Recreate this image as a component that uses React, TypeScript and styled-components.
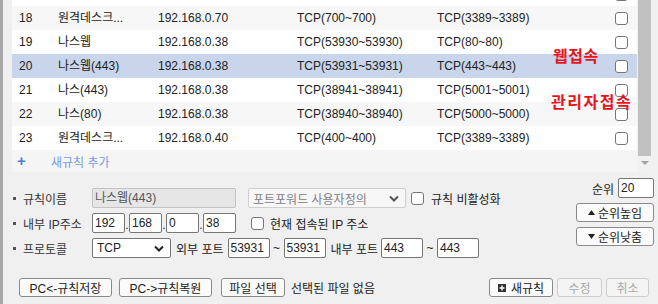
import React from "react";
import styled, { createGlobalStyle } from "styled-components";

const Global = createGlobalStyle`
  html, body { margin: 0; padding: 0; background: #ffffff; }
  * { box-sizing: border-box; }
`;

const Frame = styled.div`
  width: 658px;
  height: 304px;
  background: #f0f0f0;
  border-left: 3px solid #a8a8a8;
  display: flex;
  flex-direction: column;
  font-family: "Liberation Sans", "Noto Sans CJK KR", sans-serif;
  font-size: 12px;
  color: #222;
  position: relative;
  overflow: hidden;
`;

const ListArea = styled.div`
  display: flex;
  height: 172px;
  padding-left: 9px;
`;

const Table = styled.div`
  width: 625px;
  height: 172px;
  overflow: hidden;
  display: flex;
  flex-direction: column;
`;

const Rows = styled.div`
  margin-top: -18px;
`;

const Row = styled.div<{ $tone: "white" | "gray" | "sel" }>`
  display: grid;
  grid-template-columns: 39px 100px 139px 140px 1fr 22px;
  height: 24px;
  align-items: center;
  background: ${(p) => (p.$tone === "sel" ? "#c9d5ea" : p.$tone === "gray" ? "#f7f7f7" : "#ffffff")};
`;

const Cell = styled.div`
  padding-left: 7px;
  white-space: nowrap;
  overflow: hidden;
  line-height: 24px;
`;

const CheckCell = styled.div`
  display: flex;
  justify-content: flex-start;
  align-items: center;
`;

const Box = styled.span`
  display: inline-block;
  width: 13px;
  height: 13px;
  border: 1px solid #767676;
  border-radius: 3px;
  background: #fff;
  flex: none;
`;

const AddRow = styled.div`
  display: flex;
  align-items: center;
  height: 22px;
  background: #f5f5f5;
  color: #7b9be0;
`;

const Plus = styled.span`
  width: 39px;
  padding-left: 5px;
  color: #4f7bd3;
  font-size: 15px;
  font-weight: bold;
  line-height: 22px;
`;

const Scrollbar = styled.div`
  width: 15px;
  height: 172px;
  background: #f1f1f1;
  display: flex;
  flex-direction: column;
  align-items: center;
`;

const Thumb = styled.div`
  width: 13px;
  height: 156px;
  background: #c1c1c1;
`;

const ArrowDown = styled.div`
  margin-top: 5px;
  width: 0;
  height: 0;
  border-left: 4px solid transparent;
  border-right: 4px solid transparent;
  border-top: 4px solid #a3a3a3;
`;

const Note = styled.div<{ $top: number; $left: number; $ls: number }>`
  position: absolute;
  top: ${(p) => p.$top}px;
  left: ${(p) => p.$left}px;
  color: #e8141c;
  font-family: "Noto Sans CJK KR", sans-serif;
  font-weight: bold;
  font-size: 16px;
  line-height: 18px;
  letter-spacing: ${(p) => p.$ls}px;
`;

const FormArea = styled.div`
  display: flex;
  flex-direction: column;
  padding-left: 9px;
`;

const TopSection = styled.div`
  display: flex;
`;

const LeftForm = styled.div`
  display: flex;
  flex-direction: column;
  gap: 5px;
  padding-top: 16px;
  width: 560px;
`;

const FormRow = styled.div`
  display: flex;
  align-items: center;
  height: 20px;
`;

const Label = styled.div`
  width: 80px;
  display: flex;
  align-items: center;
  color: #333;
  font-size: 12px;
  white-space: nowrap;
`;

const Bullet = styled.span`
  width: 3px;
  height: 3px;
  background: #555;
  margin: 0 7px 0 1px;
`;

const Input = styled.div<{ $w: number; $disabled?: boolean }>`
  width: ${(p) => p.$w}px;
  height: 20px;
  border: 1px solid ${(p) => (p.$disabled ? "#c3c3c3" : "#767676")};
  border-radius: 2px;
  background: ${(p) => (p.$disabled ? "#e6e6e6" : "#ffffff")};
  color: ${(p) => (p.$disabled ? "#555" : "#222")};
  padding-left: 2px;
  line-height: 18px;
  font-size: 12px;
  white-space: nowrap;
  overflow: hidden;
  flex: none;
`;

const Dot = styled.span`
  width: 4px;
  text-align: center;
  align-self: flex-end;
  line-height: 16px;
  color: #333;
`;

const Select = styled.div<{ $w: number; $disabled?: boolean }>`
  width: ${(p) => p.$w}px;
  height: 20px;
  border: 1px solid ${(p) => (p.$disabled ? "#cfcfcf" : "#767676")};
  border-radius: 2px;
  background: ${(p) => (p.$disabled ? "#f7f7f7" : "#ffffff")};
  color: ${(p) => (p.$disabled ? "#808080" : "#222")};
  display: flex;
  align-items: center;
  justify-content: space-between;
  padding: 0 6px 0 4px;
  flex: none;
  white-space: nowrap;
`;

const Gap = styled.span<{ $w: number }>`
  width: ${(p) => p.$w}px;
  flex: none;
`;

const Text = styled.span`
  white-space: nowrap;
  color: #222;
`;

const Tilde = styled.span`
  width: 14px;
  text-align: center;
  flex: none;
`;

const RightCol = styled.div`
  display: flex;
  flex-direction: column;
  align-items: flex-end;
  gap: 5px;
  padding-top: 6px;
  width: 82px;
`;

const Rank = styled.div`
  display: flex;
  align-items: center;
  gap: 4px;
`;

const Button = styled.div<{ $w: number; $disabled?: boolean; $h?: number }>`
  width: ${(p) => p.$w}px;
  height: ${(p) => p.$h ?? 19}px;
  border: 1px solid ${(p) => (p.$disabled ? "#cccccc" : "#8a8a8a")};
  border-radius: 3px;
  background: ${(p) => (p.$disabled ? "#f4f4f4" : "#fbfbfb")};
  color: ${(p) => (p.$disabled ? "#aaaaaa" : "#222")};
  display: flex;
  align-items: center;
  justify-content: center;
  gap: 2px;
  white-space: nowrap;
  flex: none;
  font-size: 12px;
`;

const BottomBar = styled.div`
  display: flex;
  align-items: center;
  margin-top: 20px;
  padding-left: 7px;
  width: 637px;
`;

const Spacer = styled.div`
  flex: 1;
`;

const Tri = styled.svg`
  width: 7px;
  height: 5px;
  margin-right: 1px;
`;

const NewIcon = styled.svg`
  width: 8px;
  height: 8px;
  margin-right: 3px;
`;

type R = { n: string; name: string; ip: string; ext: string; int: string };
const rows: R[] = [
  { n: "", name: "", ip: "", ext: "", int: "" },
  { n: "18", name: "원격데스크...", ip: "192.168.0.70", ext: "TCP(700~700)", int: "TCP(3389~3389)" },
  { n: "19", name: "나스웹", ip: "192.168.0.38", ext: "TCP(53930~53930)", int: "TCP(80~80)" },
  { n: "20", name: "나스웹(443)", ip: "192.168.0.38", ext: "TCP(53931~53931)", int: "TCP(443~443)" },
  { n: "21", name: "나스(443)", ip: "192.168.0.38", ext: "TCP(38941~38941)", int: "TCP(5001~5001)" },
  { n: "22", name: "나스(80)", ip: "192.168.0.38", ext: "TCP(38940~38940)", int: "TCP(5000~5000)" },
  { n: "23", name: "원격데스크...", ip: "192.168.0.40", ext: "TCP(400~400)", int: "TCP(3389~3389)" },
];

const Chevron = ({ color }: { color: string }) => (
  <svg width="10" height="7" viewBox="0 0 10 7">
    <path d="M1 1.5 L5 5.5 L9 1.5" fill="none" stroke={color} strokeWidth="2" />
  </svg>
);

export default function App() {
  return (
    <Frame>
      <Global />
      <ListArea>
        <Table>
          <Rows>
            {rows.map((r, i) => (
              <Row key={i} $tone={r.n === "20" ? "sel" : i % 2 === 1 ? "gray" : "white"}>
                <Cell>{r.n}</Cell>
                <Cell>{r.name}</Cell>
                <Cell>{r.ip}</Cell>
                <Cell>{r.ext}</Cell>
                <Cell>{r.int}</Cell>
                <CheckCell>
                  <Box />
                </CheckCell>
              </Row>
            ))}
          </Rows>
          <AddRow>
            <Plus>+</Plus>
            <span>새규칙 추가</span>
          </AddRow>
        </Table>
        <Scrollbar>
          <Thumb />
          <ArrowDown />
        </Scrollbar>
      </ListArea>

      <Note $top={46} $left={550} $ls={0.5}>웹접속</Note>
      <Note $top={92} $left={548} $ls={1.5}>관리자접속</Note>

      <FormArea>
        <TopSection>
          <LeftForm>
            <FormRow>
              <Label>
                <Bullet />
                규칙이름
              </Label>
              <Input $w={144} $disabled>
                나스웹(443)
              </Input>
              <Gap $w={12} />
              <Select $w={158} $disabled>
                <span>포트포워드 사용자정의</span>
                <Chevron color="#555" />
              </Select>
              <Gap $w={5} />
              <Box />
              <Gap $w={7} />
              <Text>규칙 비활성화</Text>
            </FormRow>
            <FormRow>
              <Label>
                <Bullet />
                내부 IP주소
              </Label>
              <Input $w={33}>192</Input>
              <Dot>.</Dot>
              <Input $w={33}>168</Input>
              <Dot>.</Dot>
              <Input $w={33}>0</Input>
              <Dot>.</Dot>
              <Input $w={33}>38</Input>
              <Gap $w={15} />
              <Box />
              <Gap $w={6} />
              <Text>현재 접속된 IP 주소</Text>
            </FormRow>
            <FormRow>
              <Label>
                <Bullet />
                프로토콜
              </Label>
              <Select $w={79}>
                <span>TCP</span>
                <Chevron color="#222" />
              </Select>
              <Gap $w={5} />
              <Text>외부 포트</Text>
              <Gap $w={4} />
              <Input $w={42}>53931</Input>
              <Tilde>~</Tilde>
              <Input $w={42}>53931</Input>
              <Gap $w={5} />
              <Text>내부 포트</Text>
              <Gap $w={3} />
              <Input $w={42}>443</Input>
              <Tilde>~</Tilde>
              <Input $w={42}>443</Input>
            </FormRow>
          </LeftForm>
          <RightCol>
            <Rank>
              <Text>순위</Text>
              <Input $w={36}>20</Input>
            </Rank>
            <Button $w={78}>
              <Tri viewBox="0 0 7 5">
                <path d="M3.5 0 L7 5 L0 5 Z" fill="#222" />
              </Tri>
              순위높임
            </Button>
            <Button $w={78}>
              <Tri viewBox="0 0 7 5">
                <path d="M0 0 L7 0 L3.5 5 Z" fill="#222" />
              </Tri>
              순위낮춤
            </Button>
          </RightCol>
        </TopSection>
        <BottomBar>
          <Button $w={93}>PC&lt;-규칙저장</Button>
          <Gap $w={7} />
          <Button $w={93}>PC-&gt;규칙복원</Button>
          <Gap $w={9} />
          <Button $w={64}>파일 선택</Button>
          <Gap $w={6} />
          <Text>선택된 파일 없음</Text>
          <Spacer />
          <Button $w={64}>
            <NewIcon viewBox="0 0 8 8">
              <rect x="0" y="0" width="8" height="8" fill="#333" />
              <path d="M4 1.5 V6.5 M1.5 4 H6.5" stroke="#fff" strokeWidth="1.4" />
            </NewIcon>
            새규칙
          </Button>
          <Gap $w={4} />
          <Button $w={45} $disabled>
            수정
          </Button>
          <Gap $w={4} />
          <Button $w={43} $disabled>
            취소
          </Button>
        </BottomBar>
      </FormArea>
    </Frame>
  );
}
